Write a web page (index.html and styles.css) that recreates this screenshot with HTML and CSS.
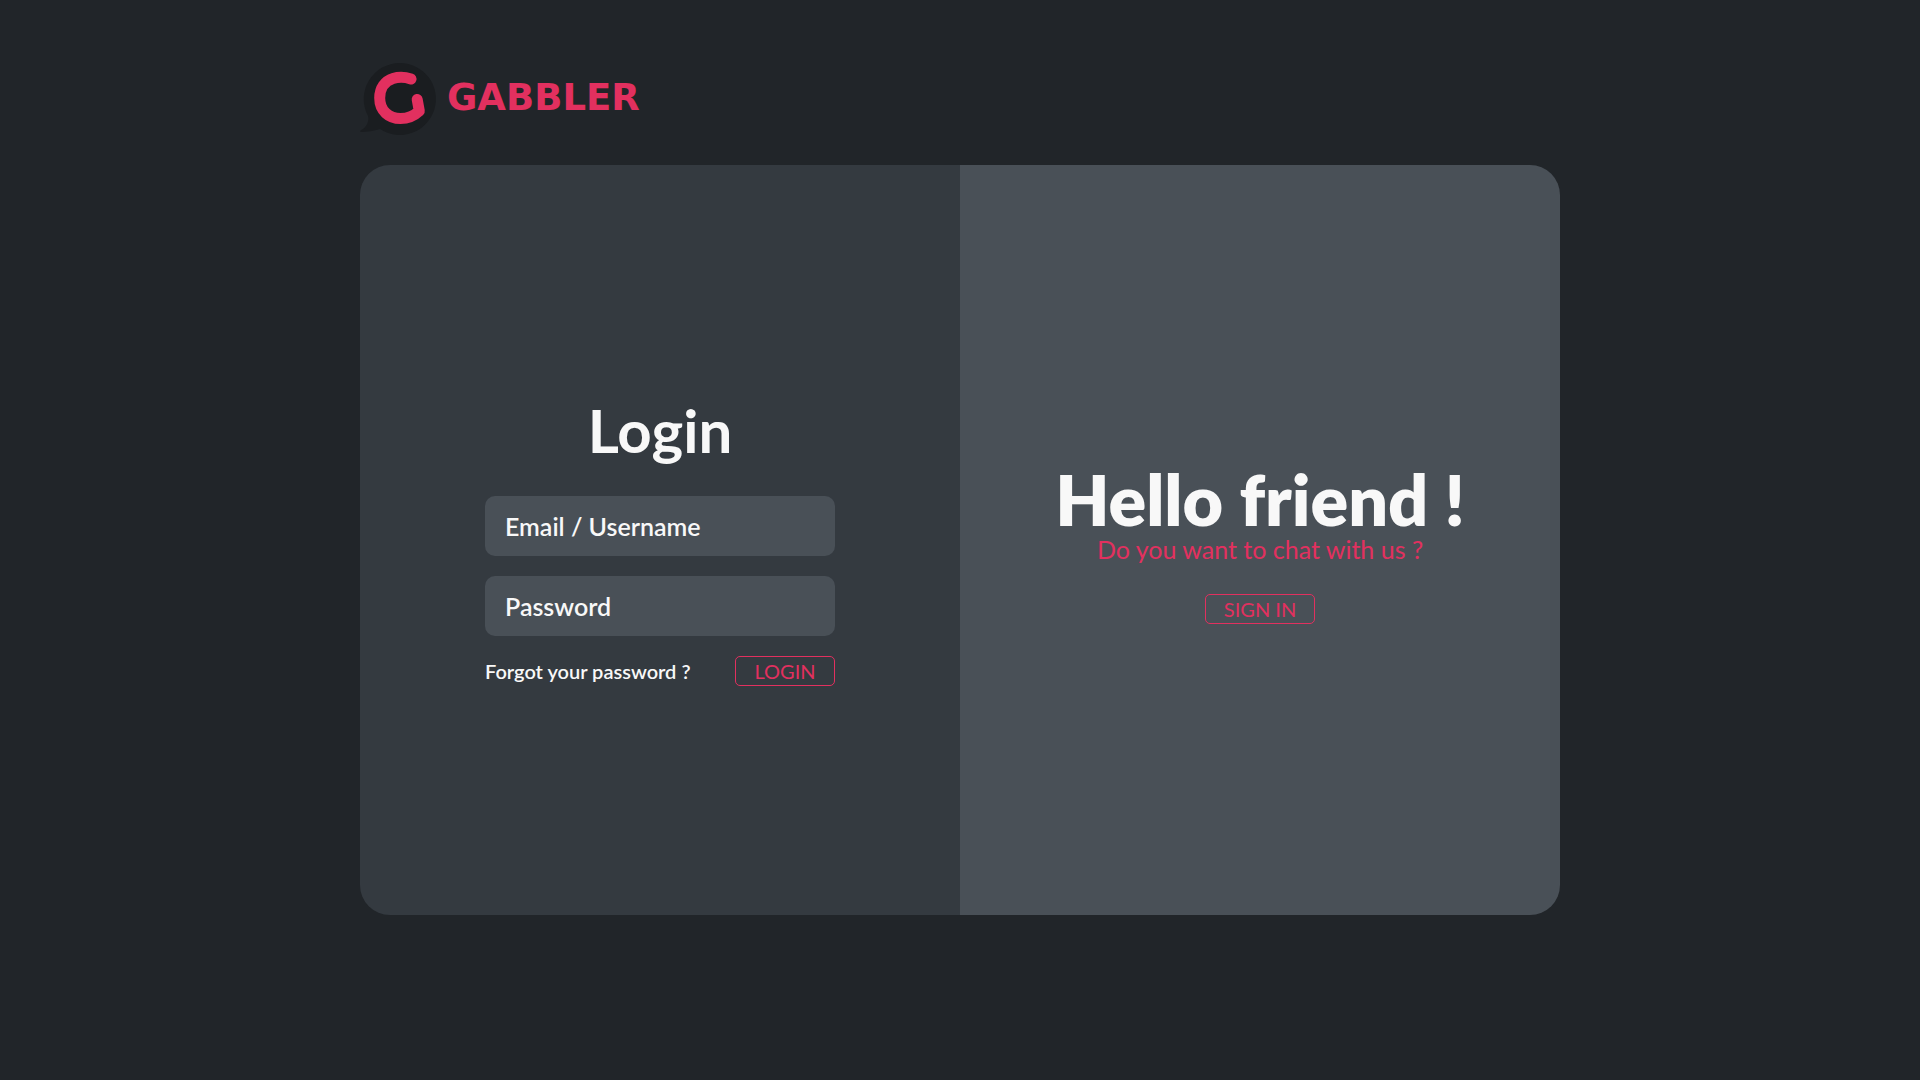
FILE: index.html
```html
<!DOCTYPE html>
<html lang="en">
<head>
<meta charset="utf-8">
<meta name="viewport" content="width=device-width, initial-scale=1">
<title>Gabbler</title>
<link rel="stylesheet" href="styles.css">
</head>
<body>
<div class="page">
  <header class="header">
    <svg class="logo" viewBox="0 0 290 80" role="img" aria-label="Gabbler">
      <path class="logo-bubble" d="M40 3a36 36 0 1 1-20 66C14 71 7 72 1 72C-1 71 1 70 3 69C8 65 9 60 8 56A36 36 0 0 1 40 3Z"/>
      <path class="logo-g" d="M51 19C45 17 38 17 33 18.500C25 21 19.700 28 19.700 38C19.700 51 29 58.500 40.500 58.500C48 58.500 54 56 59.300 51L57.200 39.500"/>
      <text class="logo-word" x="87" y="50">GABBLER</text>
    </svg>
  </header>
  <main class="card">
    <section class="panel panel-login">
      <form class="form">
        <h2 class="form-title">Login</h2>
        <input class="field" type="text" aria-label="Email / Username" placeholder="Email / Username">
        <input class="field" type="password" aria-label="Password" placeholder="Password">
        <div class="form-footer">
          <a class="forgot" href="#">Forgot your password ?</a>
          <button class="button" type="submit">LOGIN</button>
        </div>
      </form>
    </section>
    <section class="panel panel-welcome">
      <h1 class="welcome-title">Hello friend !</h1>
      <p class="welcome-text">Do you want to chat with us ?</p>
      <button class="button" type="button">SIGN IN</button>
    </section>
  </main>
</div>
</body>
</html>
```
FILE: styles.css
```css
* {
  box-sizing: border-box;
  margin: 0;
}

body {
  min-height: 100vh;
  background: #212529;
  color: #f8f8f8;
  font-family: Lato, sans-serif;
}

.page {
  max-width: 1200px;
  margin: 0 auto;
  padding: 60px 0;
}

.header {
  margin-bottom: 25px;
}

.logo {
  display: block;
  height: 80px;
  overflow: visible;
}

.logo-bubble {
  fill: #1a1d20;
}

.logo-g {
  fill: none;
  stroke: #e2305f;
  stroke-width: 11;
  stroke-linecap: round;
  stroke-linejoin: round;
}

.logo-word {
  fill: #e2305f;
  font-family: "DejaVu Sans", sans-serif;
  font-size: 37px;
  font-weight: 700;
}

.card {
  display: grid;
  grid-template-columns: repeat(auto-fit, minmax(400px, 1fr));
  min-height: 750px;
  border-radius: 30px;
  overflow: hidden;
}

.panel {
  display: flex;
  flex-direction: column;
  align-items: center;
  justify-content: center;
}

.panel-login {
  background: #343a40;
}

.panel-welcome {
  padding-top: 8px;
  background: #495057;
}

.form {
  display: flex;
  flex-direction: column;
  gap: 20px;
  width: 350px;
}

.form-title {
  margin-bottom: 10px;
  font-size: 60px;
  font-weight: 700;
  line-height: 72px;
  text-align: center;
}

.field {
  width: 100%;
  height: 60px;
  padding: 0 20px;
  border: 0;
  border-radius: 10px;
  background: #495057;
  color: inherit;
  font: 600 25px/30px Lato, sans-serif;
}

.field::placeholder {
  color: inherit;
  opacity: 1;
}

.form-footer {
  display: flex;
  align-items: center;
  justify-content: space-between;
}

.forgot {
  color: inherit;
  font-size: 20px;
  font-weight: 600;
  text-decoration: none;
}

.button {
  min-width: 100px;
  height: 30px;
  padding: 0 18px;
  border: 1px solid #e2305f;
  border-radius: 5px;
  background: transparent;
  color: #e2305f;
  font: 20px/28px Lato, sans-serif;
}

.welcome-title {
  font-size: 70px;
  font-weight: 800;
  line-height: 70px;
}

.welcome-text {
  margin-bottom: 30px;
  color: #e2305f;
  font-size: 25px;
  line-height: 30px;
}
```
